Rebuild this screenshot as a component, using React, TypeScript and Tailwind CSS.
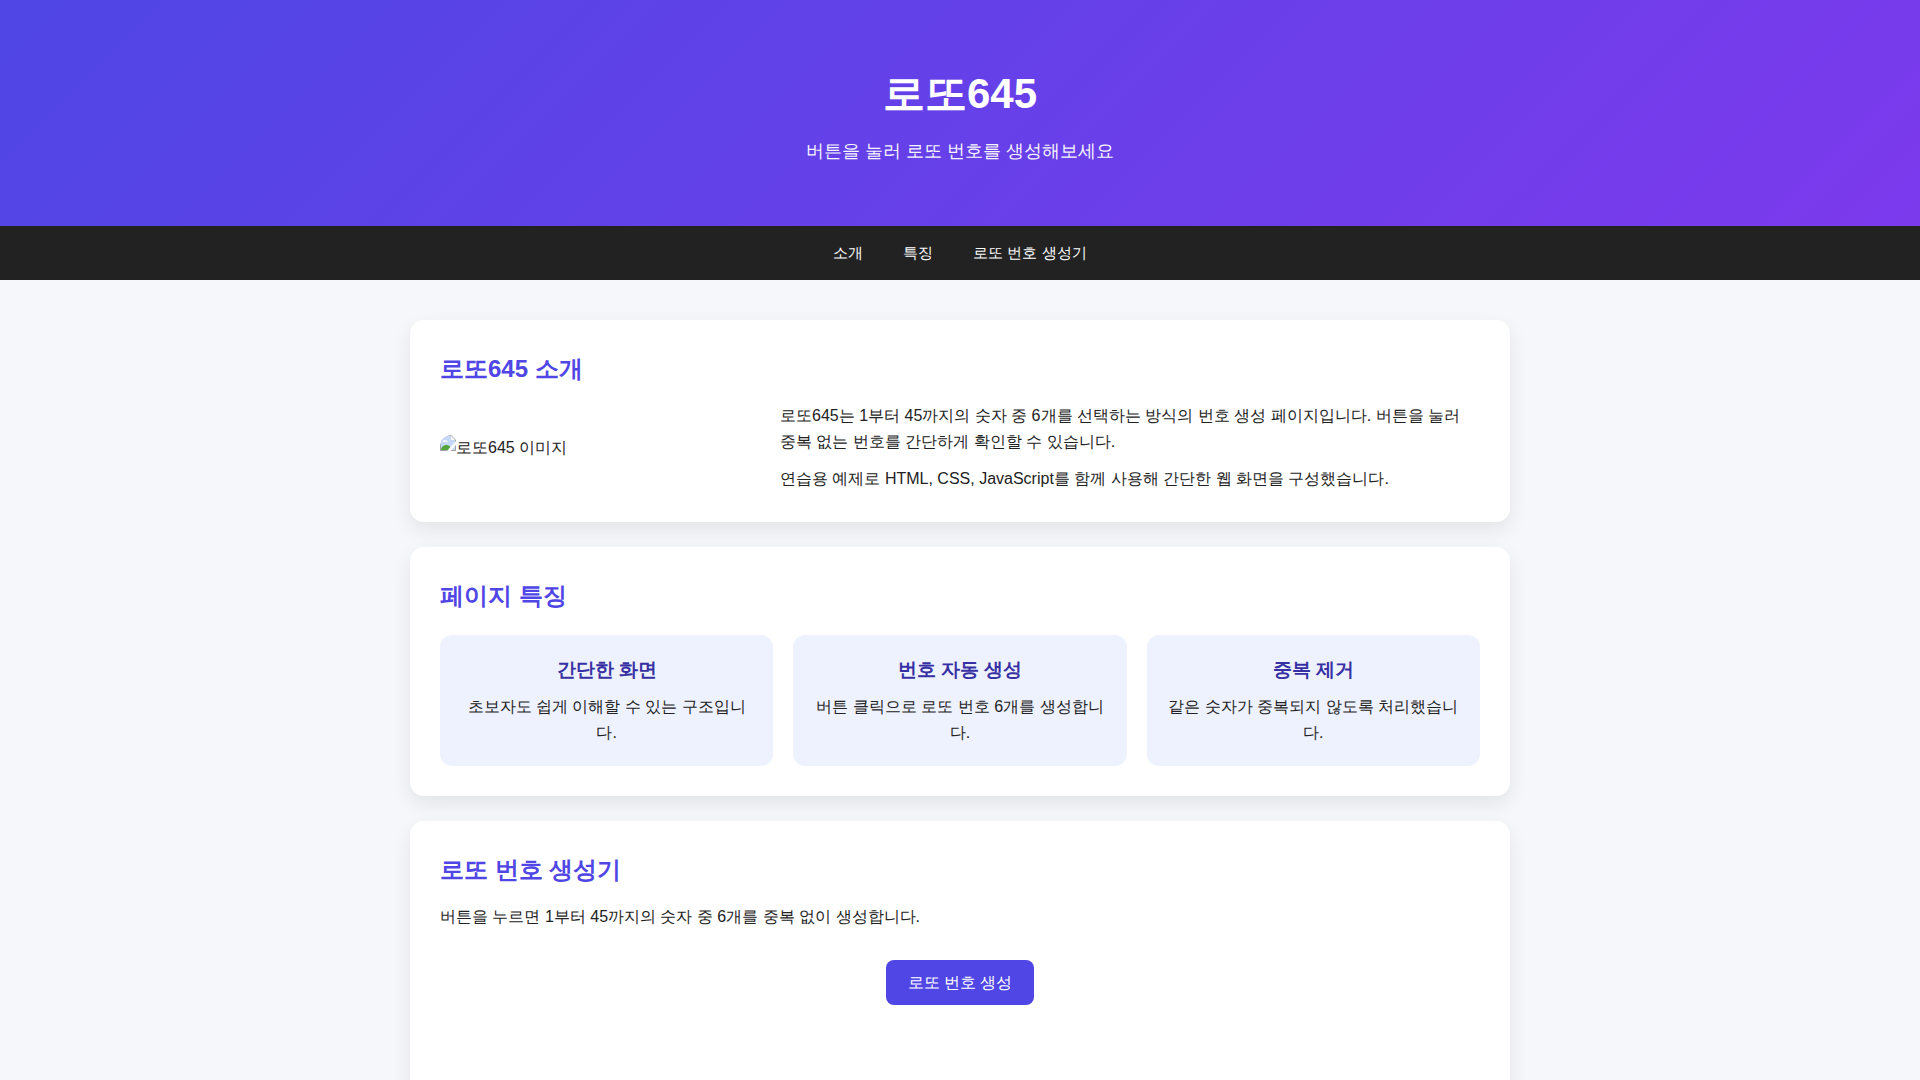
import { useState } from "react";

const links = [
    { href: "#intro", label: "소개" },
    { href: "#features", label: "특징" },
    { href: "#generator", label: "로또 번호 생성기" },
];

const features = [
    { title: "간단한 화면", text: "초보자도 쉽게 이해할 수 있는 구조입니다." },
    { title: "번호 자동 생성", text: "버튼 클릭으로 로또 번호 6개를 생성합니다." },
    { title: "중복 제거", text: "같은 숫자가 중복되지 않도록 처리했습니다." },
];

function drawNumbers() {
    const picked = new Set<number>();
    while (picked.size < 6) {
        picked.add(Math.floor(Math.random() * 45) + 1);
    }
    return [...picked].sort((a, b) => a - b);
}

function Card({ id, title, children }: { id: string; title: string; children: React.ReactNode }) {
    return (
        <section id={id} className="rounded-[14px] bg-white p-[30px] shadow-[0_8px_20px_rgba(0,0,0,0.08)]">
            <h2 className="mb-[15px] text-2xl leading-[38px] font-bold text-[#4f46e5]">{title}</h2>
            {children}
        </section>
    );
}

function MissingImage({ alt }: { alt: string }) {
    return (
        <div className="flex items-center overflow-hidden rounded-xl">
            <svg className="size-4 shrink-0 self-start" viewBox="0 0 16 16" aria-hidden="true">
                <path d="M0 0h11l5 5v11H0z" fill="#a3a3a3" />
                <path d="M1 1h10v4h4v10H1z" fill="#c5d8f7" />
                <path d="M3 7c0-2 2-2.500 2.700-1.200C7 5.500 8 6 7.700 7z" fill="#fff" />
                <path d="M1 15c0-3 3-5 5.500-5 2 0 3.500 1 4 2.500L8 15z" fill="#55a53a" />
                <path d="M11 1l4 4h-4z" fill="#fff" />
                <path d="M16 6v4l-5.500 6H7z" fill="#fff" />
            </svg>
            <span>{alt}</span>
        </div>
    );
}

export default function App() {
    const [numbers, setNumbers] = useState<number[]>([]);

    return (
        <div
            lang="ko"
            className="min-h-screen bg-[#f5f7fb] font-['Liberation_Sans',Arial,sans-serif] text-base leading-[26px] text-[#222]"
        >
            <header className="bg-[linear-gradient(135deg,#4f46e5,#7c3aed)] px-5 py-[60px] text-center text-white">
                <h1 className="mb-2.5 text-[42px] leading-[67px] font-bold">로또645</h1>
                <p className="text-lg leading-[29px] opacity-95">버튼을 눌러 로또 번호를 생성해보세요</p>
            </header>

            <nav className="flex justify-center gap-10 bg-[#222] p-3.5 text-[15px] text-white">
                {links.map((link) => (
                    <a key={link.href} href={link.href} className="hover:underline">
                        {link.label}
                    </a>
                ))}
            </nav>

            <main className="mx-auto flex max-w-[1140px] flex-col gap-[25px] px-5 py-10">
                <Card id="intro" title="로또645 소개">
                    <div className="flex items-center gap-[30px]">
                        <div className="w-[310px] shrink-0">
                            <MissingImage alt="로또645 이미지" />
                        </div>
                        <div className="flex flex-1 flex-col gap-[11px]">
                            <p>
                                로또645는 1부터 45까지의 숫자 중 6개를 선택하는 방식의 번호 생성 페이지입니다. 버튼을 눌러
                                중복 없는 번호를 간단하게 확인할 수 있습니다.
                            </p>
                            <p>연습용 예제로 HTML, CSS, JavaScript를 함께 사용해 간단한 웹 화면을 구성했습니다.</p>
                        </div>
                    </div>
                </Card>

                <Card id="features" title="페이지 특징">
                    <div className="mt-5 grid grid-cols-3 gap-5">
                        {features.map((feature) => (
                            <div key={feature.title} className="rounded-xl bg-[#eef2ff] p-5 text-center">
                                <h3 className="mb-2.5 text-[19px] leading-[29px] font-bold text-[#3730a3]">
                                    {feature.title}
                                </h3>
                                <p>{feature.text}</p>
                            </div>
                        ))}
                    </div>
                </Card>

                <Card id="generator" title="로또 번호 생성기">
                    <p>버튼을 누르면 1부터 45까지의 숫자 중 6개를 중복 없이 생성합니다.</p>
                    <div className="mt-[30px] text-center">
                        <button
                            type="button"
                            onClick={() => setNumbers(drawNumbers())}
                            className="cursor-pointer rounded-lg bg-[#4f46e5] px-[22px] py-3 leading-[21px] text-white hover:bg-[#4338ca]"
                        >
                            로또 번호 생성
                        </button>
                        <div className="mt-[25px] flex min-h-[60px] flex-wrap justify-center gap-3">
                            {numbers.map((n) => (
                                <span
                                    key={n}
                                    className="flex size-[55px] items-center justify-center rounded-full bg-[#4f46e5] text-lg font-bold text-white"
                                >
                                    {n}
                                </span>
                            ))}
                        </div>
                    </div>
                </Card>
            </main>
        </div>
    );
}
